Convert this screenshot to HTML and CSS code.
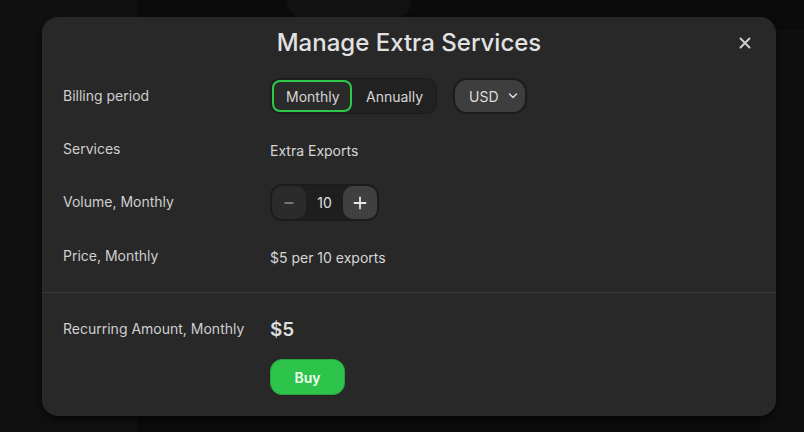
FILE: index.html
```html
<!DOCTYPE html>
<html lang="en">
<head>
<meta charset="utf-8">
<title>Manage Extra Services</title>
<link rel="stylesheet" href="styles.css">
</head>
<body>
<div class="backdrop">
  <div class="bg-side"></div>
  <div class="bg-right"></div>
  <div class="bg-pill"></div>
  <div class="modal">
    <div class="header">
      <h1 class="title">Manage Extra Services</h1>
      <button class="close" aria-label="Close">
        <svg width="12" height="12" viewBox="0 0 12 12"><path d="M1.5 1.5L10.5 10.5M10.5 1.5L1.5 10.5" stroke="#cfcfcf" stroke-width="2" stroke-linecap="round"/></svg>
      </button>
    </div>
    <div class="rows">
      <div class="row">
        <div class="label">Billing period</div>
        <div class="value controls">
          <div class="segmented">
            <button class="seg active">Monthly</button>
            <button class="seg">Annually</button>
          </div>
          <button class="select">USD
            <svg width="10" height="6" viewBox="0 0 10 6"><path d="M1.5 1L5 4.5L8.5 1" stroke="#d8d8d8" stroke-width="1.6" fill="none" stroke-linecap="round" stroke-linejoin="round"/></svg>
          </button>
        </div>
      </div>
      <div class="row">
        <div class="label">Services</div>
        <div class="value text">Extra Exports</div>
      </div>
      <div class="row">
        <div class="label">Volume, Monthly</div>
        <div class="value">
          <div class="stepper">
            <button class="step disabled" aria-label="Decrease">
              <svg width="12" height="12" viewBox="0 0 12 12"><path d="M1.5 6H10.5" stroke="#8a8a8a" stroke-width="1.6"/></svg>
            </button>
            <span class="count">10</span>
            <button class="step plus" aria-label="Increase">
              <svg width="14" height="14" viewBox="0 0 14 14"><path d="M7 1.5V12.5M1.5 7H12.5" stroke="#e6e6e6" stroke-width="1.8" stroke-linecap="round"/></svg>
            </button>
          </div>
        </div>
      </div>
      <div class="row">
        <div class="label">Price, Monthly</div>
        <div class="value text">$5 per 10 exports</div>
      </div>
    </div>
    <div class="divider"></div>
    <div class="summary">
      <div class="row total-row">
        <div class="label">Recurring Amount, Monthly</div>
        <div class="value amount">$5</div>
      </div>
      <div class="row buy-row">
        <div class="label"></div>
        <div class="value"><button class="buy">Buy</button></div>
      </div>
    </div>
  </div>
</div>
</body>
</html>
```
FILE: styles.css
```css
* { box-sizing: border-box; }
html, body { margin: 0; padding: 0; }
body {
  width: 804px;
  height: 432px;
  overflow: hidden;
  background: #0b0b0b;
  font-family: "Inter", "Noto Sans", "Liberation Sans", sans-serif;
  color: #d4d4d4;
}
button { font-family: inherit; cursor: pointer; }
.backdrop {
  position: relative;
  width: 804px;
  height: 432px;
  padding-top: 17px;
  padding-left: 42px;
}
.bg-side {
  position: absolute;
  left: 0; top: 0;
  width: 137px; height: 432px;
  background: #101010;
}
.bg-right {
  position: absolute;
  left: 760px; top: 30px;
  width: 44px; height: 402px;
  background: #0f0f0f;
}
.bg-pill {
  position: absolute;
  left: 287px; top: -14px;
  width: 124px; height: 32px;
  border-radius: 16px;
  background: #121212;
}
.modal {
  position: relative;
  width: 734px;
  height: 399px;
  background: #282828;
  border-radius: 16px;
  box-shadow: 0 4px 6px rgba(0,0,0,0.55);
  padding: 11px 21px 0 21px;
}
.header {
  position: relative;
  display: flex;
  justify-content: center;
  height: 30px;
}
.title {
  margin: 0;
  font-size: 24px;
  line-height: 30px;
  font-weight: 500;
  color: #e2e2e2;
  letter-spacing: 0;
}
.close {
  position: absolute;
  right: 4px;
  top: 9px;
  width: 12px; height: 12px;
  padding: 0;
  border: 0;
  background: none;
  display: flex;
}
.rows {
  margin-top: 20px;
  display: flex;
  flex-direction: column;
  gap: 17px;
  padding-bottom: 18px;
}
.row {
  display: flex;
  align-items: center;
  min-height: 36px;
}
.label {
  width: 207px;
  flex: none;
  font-size: 14px;
  color: #cfcfcf;
  margin-top: -2px;
}
.value { display: flex; align-items: center; }
.text { font-size: 14px; color: #d6d6d6; margin-top: 2px; }
.controls { gap: 16px; }
.segmented {
  display: flex;
  height: 36px;
  padding: 1px;
  background: #212121;
  border: 1px solid #1a1a1a;
  border-radius: 10px;
}
.seg {
  height: 32px;
  border: 2px solid transparent;
  border-radius: 8px;
  background: transparent;
  color: #d6d6d6;
  font-size: 14px;
  padding: 0 12px;
}
.seg.active {
  width: 80px;
  border-color: #2fc94a;
  background: #2a2a2a;
}
.seg:not(.active) { width: 83px; }
.select {
  height: 36px;
  width: 74px;
  display: flex;
  align-items: center;
  gap: 9px;
  padding: 0 0 0 14px;
  background: #3e3e3e;
  border: 2px solid #1c1c1c;
  border-radius: 14px;
  color: #dcdcdc;
  font-size: 14px;
}
.stepper {
  display: flex;
  align-items: center;
  height: 37px;
  width: 109px;
  padding: 1px;
  background: #1e1e1e;
  border: 1px solid #1a1a1a;
  border-radius: 12px;
}
.step {
  width: 34px;
  height: 33px;
  border: 0;
  border-radius: 10px;
  display: flex;
  align-items: center;
  justify-content: center;
  padding: 0;
}
.step.disabled { background: #2b2b2b; cursor: default; }
.step.plus { background: #404040; }
.count {
  flex: 1;
  text-align: center;
  font-size: 14px;
  color: #e0e0e0;
}
.divider {
  height: 1px;
  background: #3a3a3a;
  margin: 0 -21px;
}
.summary {
  display: flex;
  flex-direction: column;
  padding-top: 24px;
  gap: 18px;
}
.total-row { min-height: 24px; }
.amount {
  font-size: 19px;
  font-weight: 600;
  color: #dedede;
}
.buy {
  width: 75px;
  height: 36px;
  background: #2ec44b;
  border: 1px solid #27a33f;
  border-radius: 12px;
  color: #f4fff4;
  font-size: 14px;
  font-weight: 600;
}
```
